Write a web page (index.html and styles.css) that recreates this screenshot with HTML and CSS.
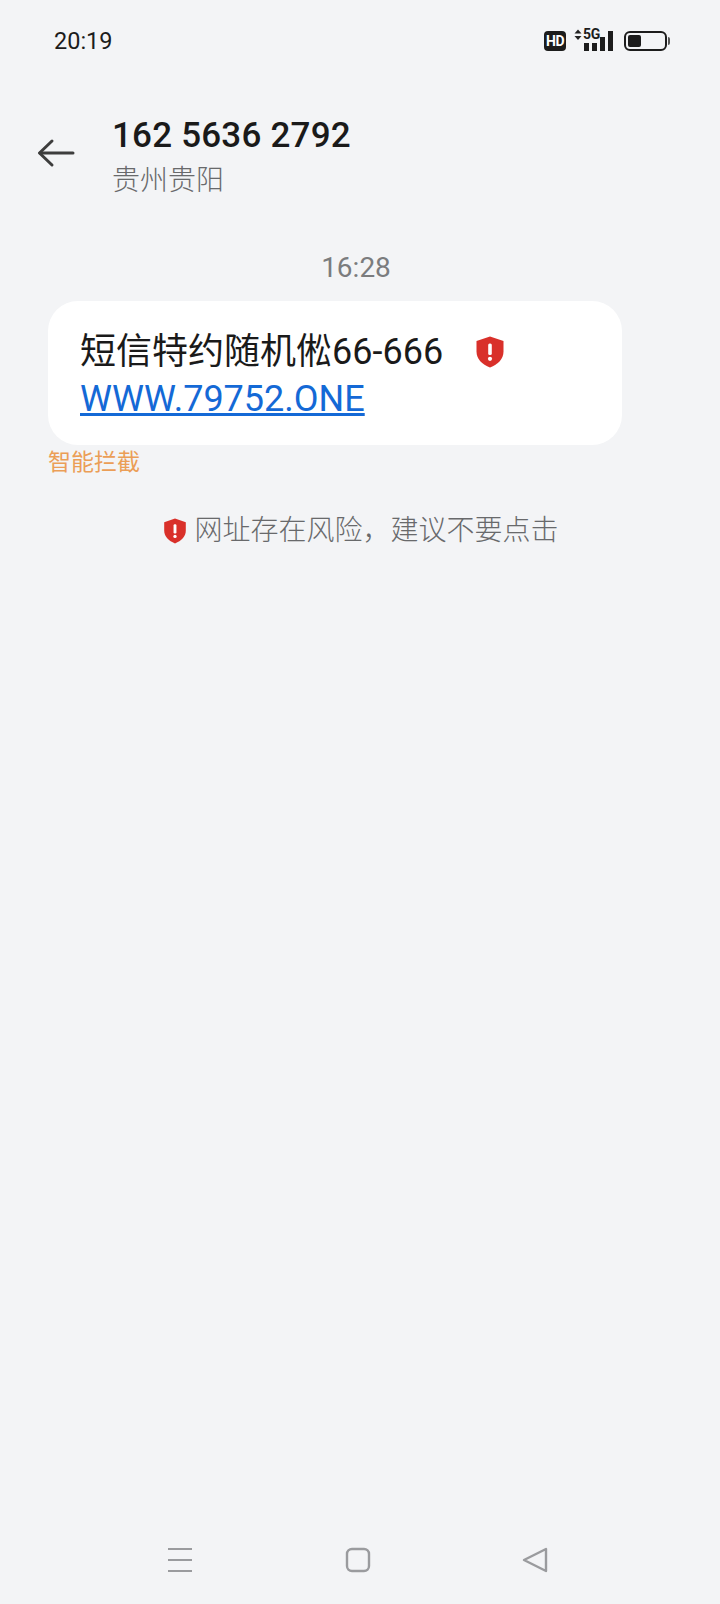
FILE: index.html
```html
<!DOCTYPE html>
<html lang="zh-CN">
<head>
    <meta charset="UTF-8">
    <meta name="viewport" content="width=device-width, initial-scale=1.0">
    <title>短信</title>
    <link rel="stylesheet" href="styles.css">
</head>
<body>
    <div class="screen">
        <div class="status-bar">
            <span class="clock">20:19</span>
            <div class="status-icons">
                <span class="hd-badge">HD</span>
                <div class="signal">
                    <svg class="updown" width="8" height="12" viewBox="0 0 8 12">
                        <path d="M4 0.5 7.5 4.5H0.5Z M0.5 7H7.5L4 11Z" fill="#222"></path>
                    </svg>
                    <span class="five-g">5G</span>
                    <div class="bars">
                        <i class="bar bar-1"></i>
                        <i class="bar bar-2"></i>
                        <i class="bar bar-3"></i>
                        <i class="bar bar-4"></i>
                    </div>
                </div>
                <div class="battery">
                    <div class="battery-body"><div class="battery-level"></div></div>
                    <div class="battery-cap"></div>
                </div>
            </div>
        </div>

        <header class="top-bar">
            <button class="back" aria-label="返回">
                <svg width="38" height="30" viewBox="0 0 38 30" fill="none" stroke="#3d3d3d" stroke-width="3" stroke-linecap="round" stroke-linejoin="round">
                    <path d="M36 15H3"></path>
                    <path d="M15 3 2.5 15 15 27"></path>
                </svg>
            </button>
            <div class="contact">
                <div class="number">162 5636 2792</div>
                <div class="place">贵州贵阳</div>
            </div>
        </header>

        <main class="thread">
            <div class="time">16:28</div>
            <div class="bubble">
                <div class="line">
                    <span>短信特约随机倯66-666</span>
                    <svg class="shield shield-big" viewBox="0 0 30 32">
                        <path d="M15 0.5 28.5 5V15.5C28.5 23 23 28.5 15 31.5 7 28.5 1.5 23 1.5 15.5V5Z" fill="#d9302a"></path>
                        <rect x="13.2" y="7.5" width="3.6" height="11.5" rx="1.5" fill="#fff"></rect>
                        <circle cx="15" cy="22.8" r="2.1" fill="#fff"></circle>
                    </svg>
                </div>
                <a class="link" href="#">WWW.79752.ONE</a>
            </div>
            <div class="blocked">智能拦截</div>
            <div class="warning">
                <svg class="shield shield-small" viewBox="0 0 30 32">
                    <path d="M15 0.5 28.5 5V15.5C28.5 23 23 28.5 15 31.5 7 28.5 1.5 23 1.5 15.5V5Z" fill="#d9302a"></path>
                    <rect x="13.2" y="7.5" width="3.6" height="11.5" rx="1.5" fill="#fff"></rect>
                    <circle cx="15" cy="22.8" r="2.1" fill="#fff"></circle>
                </svg>
                <span>网址存在风险，建议不要点击</span>
            </div>
        </main>

        <nav class="nav-bar">
            <svg width="26" height="26" viewBox="0 0 26 26" fill="none" stroke="#9a9b9e" stroke-width="2">
                <path d="M1 2H25M1 13H25M1 24H25"></path>
            </svg>
            <svg width="26" height="26" viewBox="0 0 26 26" fill="none" stroke="#9a9b9e" stroke-width="2.4">
                <rect x="2" y="2" width="22" height="22" rx="5"></rect>
            </svg>
            <svg width="26" height="26" viewBox="0 0 26 26" fill="none" stroke="#9a9b9e" stroke-width="2.4" stroke-linejoin="round">
                <path d="M24 2V24L2 13Z"></path>
            </svg>
        </nav>
    </div>
</body>
</html>
```

FILE: styles.css
```css
:root {
    --bg-color: #f3f4f6;
    --text-color: #1a1a1a;
    --muted-color: #7b7c7e;
    --soft-color: #68696b;
    --link-color: #1469d6;
    --warn-color: #eb9e57;
}

* {
    margin: 0;
    padding: 0;
    box-sizing: border-box;
}

body {
    font-family: Roboto, "Noto Sans CJK SC", sans-serif;
    background-color: var(--bg-color);
    color: var(--text-color);
}

.screen {
    width: 720px;
    height: 1604px;
    display: flex;
    flex-direction: column;
    overflow: hidden;
}

.status-bar {
    height: 82px;
    padding: 0 50px 0 54px;
    display: flex;
    align-items: center;
    justify-content: space-between;
}

.clock {
    font-size: 23.5px;
    color: #1c1c1c;
}

.status-icons {
    display: flex;
    align-items: center;
}

.hd-badge {
    width: 22px;
    height: 20px;
    margin-right: 8px;
    border-radius: 4px;
    background-color: #1c1c1c;
    color: #fff;
    font-size: 14px;
    font-weight: 700;
    line-height: 20px;
    text-align: center;
    letter-spacing: -0.5px;
}

.signal {
    position: relative;
    width: 39px;
    height: 24px;
    margin-right: 11px;
}

.updown {
    position: absolute;
    left: 0;
    top: 0;
}

.five-g {
    position: absolute;
    left: 9px;
    top: -3px;
    font-size: 14px;
    font-weight: 700;
    line-height: 16px;
    color: #1c1c1c;
    letter-spacing: -0.3px;
}

.bars {
    position: absolute;
    left: 10px;
    right: 0;
    bottom: 2px;
    display: flex;
    align-items: flex-end;
    gap: 3px;
}

.bar {
    width: 5px;
    background-color: #1c1c1c;
}

.bar-1 { height: 8px; }
.bar-2 { height: 8px; }
.bar-3 { height: 14px; }
.bar-4 { height: 20px; }

.battery {
    display: flex;
    align-items: center;
}

.battery-body {
    width: 43px;
    height: 20px;
    padding: 2px;
    border: 2px solid #1c1c1c;
    border-radius: 6px;
}

.battery-level {
    width: 13px;
    height: 100%;
    border-radius: 2px;
    background-color: #1c1c1c;
}

.battery-cap {
    width: 2px;
    height: 8px;
    margin-left: 1px;
    border-radius: 0 2px 2px 0;
    background-color: #555;
}

.top-bar {
    display: flex;
    align-items: center;
    padding: 32px 0 0 37px;
}

.back {
    display: flex;
    margin: 0 37px 10px 0;
    border: none;
    background: none;
}

.number {
    font-size: 35px;
    font-weight: 500;
    line-height: 44px;
    letter-spacing: 0.2px;
}

.place {
    margin-top: 3px;
    font-size: 28px;
    font-weight: 300;
    line-height: 40px;
    color: var(--soft-color);
}

.thread {
    flex: 1;
    display: flex;
    flex-direction: column;
    padding-top: 47px;
}

.time {
    padding-right: 8px;
    font-size: 28px;
    line-height: 40px;
    text-align: center;
    color: var(--muted-color);
}

.bubble {
    width: 574px;
    height: 144px;
    margin: 13px 0 0 48px;
    padding: 28px 32px 0;
    border-radius: 30px;
    background-color: #fff;
}

.line {
    display: flex;
    align-items: center;
    height: 46px;
    font-size: 36px;
    line-height: 46px;
}

.shield {
    flex-shrink: 0;
}

.shield-big {
    width: 30px;
    height: 32px;
    margin-left: 32px;
}

.link {
    display: block;
    width: fit-content;
    margin-top: 1px;
    font-size: 36px;
    line-height: 46px;
    color: var(--link-color);
}

.blocked {
    margin: 2px 0 0 48px;
    font-size: 23px;
    line-height: 32px;
    color: var(--warn-color);
}

.warning {
    display: flex;
    align-items: center;
    justify-content: center;
    gap: 7px;
    margin-top: 30px;
    padding-left: 2px;
    font-size: 28px;
    font-weight: 300;
    line-height: 44px;
    color: var(--soft-color);
}

.shield-small {
    width: 24px;
    height: 26px;
}

.nav-bar {
    display: flex;
    align-items: center;
    justify-content: space-between;
    padding: 0 172px 31px 167px;
}
```
